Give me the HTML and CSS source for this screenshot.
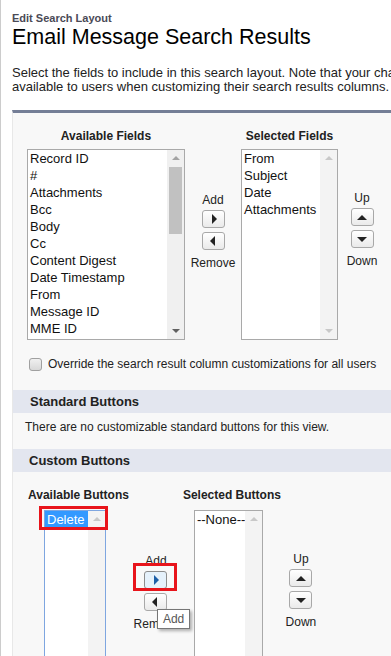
FILE: index.html
```html
<html>
<head>
  <title>Edit Search Layout</title>
  <link rel="stylesheet" href="styles.css">
</head>
<body><div id="page">
  <div class="head">
    <div class="crumb">Edit Search Layout</div>
    <h1>Email Message Search Results</h1>
    <p class="intro">Select the fields to include in this search layout. Note that your changes will be<br>available to users when customizing their search results columns.</p>
  </div>

  <div class="panel">
    <div class="duel">
      <div class="col avail">
        <div class="colhead">Available Fields</div>
        <div class="listbox big">
          <div class="items">
            <div>Record ID</div>
            <div>#</div>
            <div>Attachments</div>
            <div>Bcc</div>
            <div>Body</div>
            <div>Cc</div>
            <div>Content Digest</div>
            <div>Date Timestamp</div>
            <div>From</div>
            <div>Message ID</div>
            <div>MME ID</div>
          </div>
          <div class="sbar">
            <span class="arr up"></span>
            <span class="thumb"></span>
            <span class="arr down"></span>
          </div>
        </div>
      </div>
      <div class="mover">
        <div class="lbl">Add</div>
        <div class="btn"><span class="tri right"></span></div>
        <div class="btn"><span class="tri left"></span></div>
        <div class="lbl">Remove</div>
      </div>
      <div class="col sel">
        <div class="colhead">Selected Fields</div>
        <div class="listbox big">
          <div class="items">
            <div>From</div>
            <div>Subject</div>
            <div>Date</div>
            <div>Attachments</div>
          </div>
          <div class="sbar off">
            <span class="arr up"></span>
            <span class="arr down"></span>
          </div>
        </div>
      </div>
      <div class="mover order">
        <div class="lbl">Up</div>
        <div class="btn"><span class="tri upw"></span></div>
        <div class="btn"><span class="tri dn"></span></div>
        <div class="lbl">Down</div>
      </div>
    </div>

    <label class="override"><span class="check"></span>Override the search result column customizations for all users</label>

    <h3 class="sect">Standard Buttons</h3>
    <div class="note">There are no customizable standard buttons for this view.</div>

    <h3 class="sect custom">Custom Buttons</h3>
    <div class="duel small">
      <div class="col">
        <div class="colhead left">Available Buttons</div>
        <div class="listbox tall focus">
          <div class="items">
            <div class="picked">Delete</div>
          </div>
          <div class="sbar off">
            <span class="arr up"></span>
          </div>
          <div class="mark markbox"></div>
        </div>
      </div>
      <div class="mover sm">
        <div class="lbl">Add</div>
        <div class="btn hot"><span class="tri right"></span><div class="mark markbtn"></div></div>
        <div class="btn"><span class="tri left"></span></div>
        <div class="lbl">Remove</div>
        <div class="tip">Add</div>
      </div>
      <div class="col">
        <div class="colhead left">Selected Buttons</div>
        <div class="listbox tall narrow">
          <div class="items">
            <div>--None--</div>
          </div>
          <div class="sbar off">
            <span class="arr up"></span>
          </div>
        </div>
      </div>
      <div class="mover order sm">
        <div class="lbl">Up</div>
        <div class="btn"><span class="tri upw"></span></div>
        <div class="btn"><span class="tri dn"></span></div>
        <div class="lbl">Down</div>
      </div>
    </div>
  </div>
</div></body>
</html>
```

FILE: styles.css
```css
body {
  margin: 0px;
  background-color: #FFF;
  font-family: "Liberation Sans", Arial, sans-serif;
  color: #000;
  overflow: hidden;
}
#page {
  border-left: 1px solid #CCC;
  min-height: 656px;
  padding-left: 11px;
}
.head {
  padding-top: 12px;
}
.crumb {
  font-size: 11px;
  font-weight: bold;
  line-height: 13px;
  color: #4A4A56;
}
h1 {
  margin: 0;
  font-size: 21.5px;
  font-weight: normal;
  line-height: 24px;
}
.intro {
  margin: 17px 0 0 0;
  font-size: 13px;
  line-height: 14px;
  white-space: nowrap;
  color: #222;
}
.panel {
  margin-top: 16px;
  width: 600px;
  min-height: 540px;
  background-color: #F8F8F8;
  border-top: 3px solid #747E96;
  border-left: 1px solid #E8E8E8;
}

/* dueling list boxes */
.duel {
  display: flex;
  align-items: flex-start;
  padding: 16px 0 0 14px;
}
.col {
  display: flex;
  flex-direction: column;
}
.colhead {
  font-size: 12px;
  font-weight: bold;
  text-align: center;
  line-height: 14px;
  margin-bottom: 6px;
  color: #222;
}
.colhead.left {
  text-align: left;
}
.listbox {
  position: relative;
  display: flex;
  background-color: #FFF;
  border: 1px solid #A9A9A9;
  height: 189px;
}
.avail .listbox {
  width: 156px;
}
.sel .listbox {
  width: 95px;
}
.items {
  flex: 1;
  padding: 0 0 0 2px;
  font-size: 13px;
  line-height: 17px;
  color: #111;
  white-space: nowrap;
  overflow: hidden;
}
.sbar {
  position: relative;
  width: 17px;
  background-color: #F0F0F0;
}
.sbar.off {
  background-color: #F3F3F3;
}
.thumb {
  position: absolute;
  left: 2px;
  top: 17px;
  width: 13px;
  height: 67px;
  background-color: #C1C1C1;
}
.arr {
  position: absolute;
  left: 5px;
  width: 0;
  height: 0;
  border-left: 4px solid transparent;
  border-right: 4px solid transparent;
}
.arr.up {
  top: 6px;
  border-bottom: 4px solid #A3A3A3;
}
.arr.down {
  bottom: 6px;
  border-top: 4px solid #606060;
}
.sbar.off .arr.up {
  border-bottom-color: #C8C8C8;
}
.sbar.off .arr.down {
  border-top-color: #C8C8C8;
}

.mover {
  position: relative;
  display: flex;
  flex-direction: column;
  align-items: center;
  width: 56px;
  padding-top: 63px;
}
.mover.order {
  width: 48px;
  padding-top: 61px;
}
.lbl {
  font-size: 12px;
  line-height: 14px;
  margin: 1px 0 3px 0;
  color: #222;
}
.btn + .lbl {
  margin: 2px 0 0 0;
}
.btn {
  position: relative;
  width: 21px;
  height: 16px;
  margin-bottom: 4px;
  border: 1px solid #A8A8A8;
  border-radius: 3px;
  background: linear-gradient(#FFF, #EAEAEA);
  display: flex;
  align-items: center;
  justify-content: center;
}
.btn.hot {
  background: #E5F1FB;
  border-color: #8C8C8C;
}
.tri {
  width: 0;
  height: 0;
}
.tri.right {
  border-top: 5px solid transparent;
  border-bottom: 5px solid transparent;
  border-left: 5px solid #222;
  margin-left: 2px;
}
.btn.hot .tri.right {
  border-left-color: #1C5FA8;
}
.tri.left {
  border-top: 5px solid transparent;
  border-bottom: 5px solid transparent;
  border-right: 5px solid #222;
  margin-right: 2px;
}
.tri.upw {
  border-left: 5px solid transparent;
  border-right: 5px solid transparent;
  border-bottom: 5px solid #222;
}
.tri.dn {
  border-left: 5px solid transparent;
  border-right: 5px solid transparent;
  border-top: 5px solid #222;
}

.override {
  display: flex;
  align-items: center;
  margin: 17px 0 0 16px;
  font-size: 12px;
  color: #222;
}
.check {
  width: 11px;
  height: 11px;
  margin-right: 6px;
  border: 1px solid #A0A0A0;
  border-radius: 3px;
  background: linear-gradient(#F0F0F0, #D8D8D8);
}
.sect {
  margin: 19px 0 0 0;
  padding-left: 17px;
  height: 23px;
  line-height: 23px;
  font-size: 13px;
  background-color: #E3E6EF;
  color: #222;
}
.sect.custom {
  margin-top: 15px;
  padding-left: 16px;
}
.note {
  margin: 7px 0 0 12px;
  font-size: 12px;
  line-height: 14px;
  color: #222;
}

/* custom buttons */
.duel.small {
  padding: 16px 0 0 15px;
}
.duel.small .colhead {
  margin-bottom: 8px;
}
.listbox.tall {
  height: 160px;
  width: 60px;
  margin-left: 16px;
}
.listbox.narrow {
  width: 67px;
  margin-left: 11px;
}
.listbox.focus {
  border-color: #7EA6E0;
}
.picked {
  padding-left: 2px;
  margin-left: -2px;
  background-color: #3399FF;
  color: #FFF;
}
.mover.sm {
  width: 54px;
  padding-top: 65px;
}
.mover.order.sm {
  width: 40px;
  padding-top: 63px;
}
.mark {
  position: absolute;
  border: 3px solid #E8141B;
}
.markbox {
  left: -6px;
  top: -5px;
  width: 63px;
  height: 18px;
}
.markbtn {
  left: -12px;
  top: -9px;
  width: 38px;
  height: 22px;
}
.tip {
  position: absolute;
  left: 28px;
  top: 121px;
  padding: 2px 5px;
  font-size: 12px;
  line-height: 14px;
  color: #575757;
  background-color: #FFF;
  border: 1px solid #767676;
  box-shadow: 2px 2px 3px rgba(0, 0, 0, 0.3);
}
```
